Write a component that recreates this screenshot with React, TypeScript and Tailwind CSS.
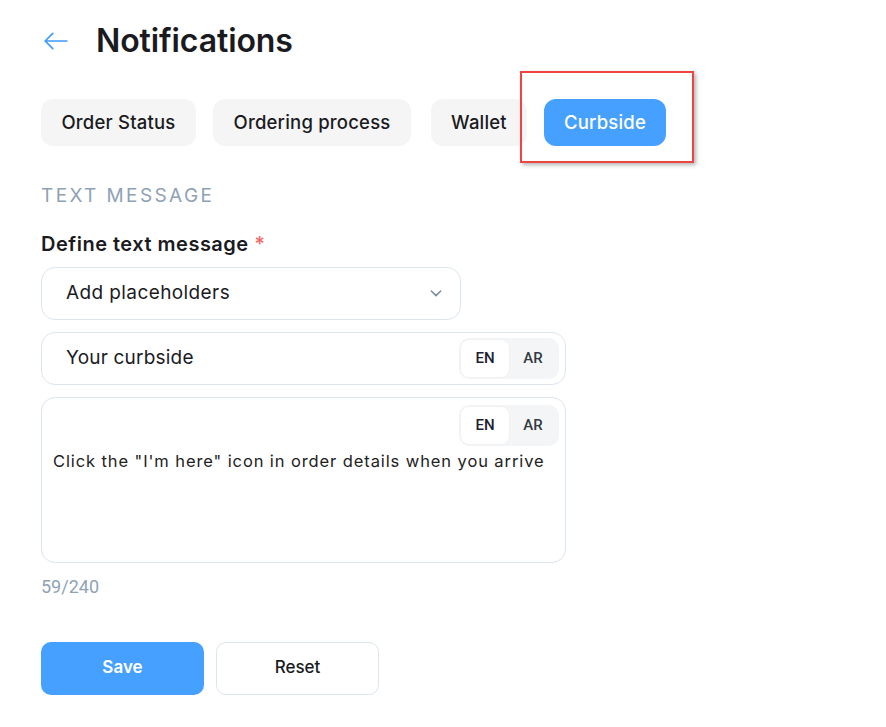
import React, { useState } from 'react';

const tabs = [
  { label: 'Order Status', w: 'w-[155px]' },
  { label: 'Ordering process', w: 'w-[198px]' },
  { label: 'Wallet', w: 'w-[96px]' },
  { label: 'Curbside', w: 'w-[122px]' },
];

function LangToggle() {
  const [lang, setLang] = useState('EN');
  return (
    <div className="flex items-center rounded-[10px] bg-[#f4f5f6] p-[2px] font-['Roboto',sans-serif] text-[15px] font-medium">
      {['EN', 'AR'].map((l) => (
        <button
          key={l}
          type="button"
          onClick={() => setLang(l)}
          className={`flex h-[37px] w-[48px] items-center justify-center rounded-[8px] ${
            lang === l ? 'bg-white text-[#1c2130] shadow-[0_0_3px_rgba(0,0,0,0.04)]' : 'text-[#333a44]'
          }`}
        >
          {l}
        </button>
      ))}
    </div>
  );
}

export default function App() {
  const [active, setActive] = useState('Curbside');
  const message = 'Click the "I\'m here" icon in order details when you arrive';

  return (
    <div className="relative min-h-[727px] bg-white pl-[41px] pt-[20px] font-['Inter',sans-serif] text-[#1b1b1f]">
      {/* Header */}
      <div className="flex h-[42px] items-center">
        <svg className="ml-[2px] h-[26px] w-[26px] text-[#3f9bff]" viewBox="0 0 24 24" fill="none" stroke="currentColor" strokeWidth={1.6} strokeLinecap="round" strokeLinejoin="round">
          <path d="M22 12H2M9 5l-7 7 7 7" />
        </svg>
        <h1 className="ml-[27px] text-[32px] font-semibold tracking-[-0.1px]">Notifications</h1>
      </div>

      {/* Tabs */}
      <div className="mt-[37px] flex">
        {tabs.map((t, i) => (
          <button
            key={t.label}
            type="button"
            onClick={() => setActive(t.label)}
            className={`h-[47px] ${t.w} ${i === 0 ? '' : i === 2 ? 'ml-[20px]' : 'ml-[17px]'} rounded-[12px] text-[18.5px] font-medium tracking-[0.2px] ${
              active === t.label ? 'bg-[#45a0ff] text-white' : 'bg-[#f5f5f5] text-[#1b1b1f]'
            }`}
          >
            {t.label}
          </button>
        ))}
      </div>

      {/* Section */}
      <div className="mt-[36px] text-[19px] uppercase tracking-[2.4px] text-[#8ea2b6]">Text message</div>
      <div className="mt-[18px] text-[20px] font-semibold tracking-[0.5px]">
        Define text message <span className="text-[#f26b6b]">*</span>
      </div>

      <div className="mt-[8px] flex h-[53px] w-[420px] items-center justify-between rounded-[14px] border border-[#dce5ee] pl-[24px] pr-[16px]">
        <span className="text-[19px] tracking-[0.4px]">Add placeholders</span>
        <svg className="h-[16px] w-[16px] text-[#7d8ea0]" viewBox="0 0 24 24" fill="none" stroke="currentColor" strokeWidth={2.4} strokeLinecap="round" strokeLinejoin="round">
          <path d="M5 9l7 7 7-7" />
        </svg>
      </div>

      <div className="mt-[12px] flex h-[53px] w-[525px] items-center justify-between rounded-[14px] border border-[#dce5ee] pl-[24px] pr-[6px]">
        <span className="text-[19px] tracking-[0.2px]">Your curbside</span>
        <LangToggle />
      </div>

      <div className="mt-[12px] h-[166px] w-[525px] rounded-[14px] border border-[#dce5ee] pl-[11px] pr-[6px] pt-[7px]">
        <div className="flex justify-end">
          <LangToggle />
        </div>
        <p className="mt-[3px] text-[16.5px] tracking-[0.9px] text-[#222]">{message}</p>
      </div>

      <div className="mt-[10px] font-['Roboto',sans-serif] text-[18px] text-[#8ea2b6]">59/240</div>

      <div className="mt-[42px] flex gap-[12px]">
        <button type="button" className="h-[53px] w-[163px] rounded-[10px] bg-[#45a0ff] text-[17px] font-semibold text-white">
          Save
        </button>
        <button type="button" className="h-[53px] w-[163px] rounded-[10px] border border-[#dce5ee] bg-white text-[17px] font-medium">
          Reset
        </button>
      </div>

      {/* Highlight annotation */}
      <div className="pointer-events-none absolute left-[520px] top-[71px] h-[92px] w-[174px] border-2 border-[#ee4444] shadow-[2px_2px_4px_rgba(0,0,0,0.3)]" />
    </div>
  );
}
